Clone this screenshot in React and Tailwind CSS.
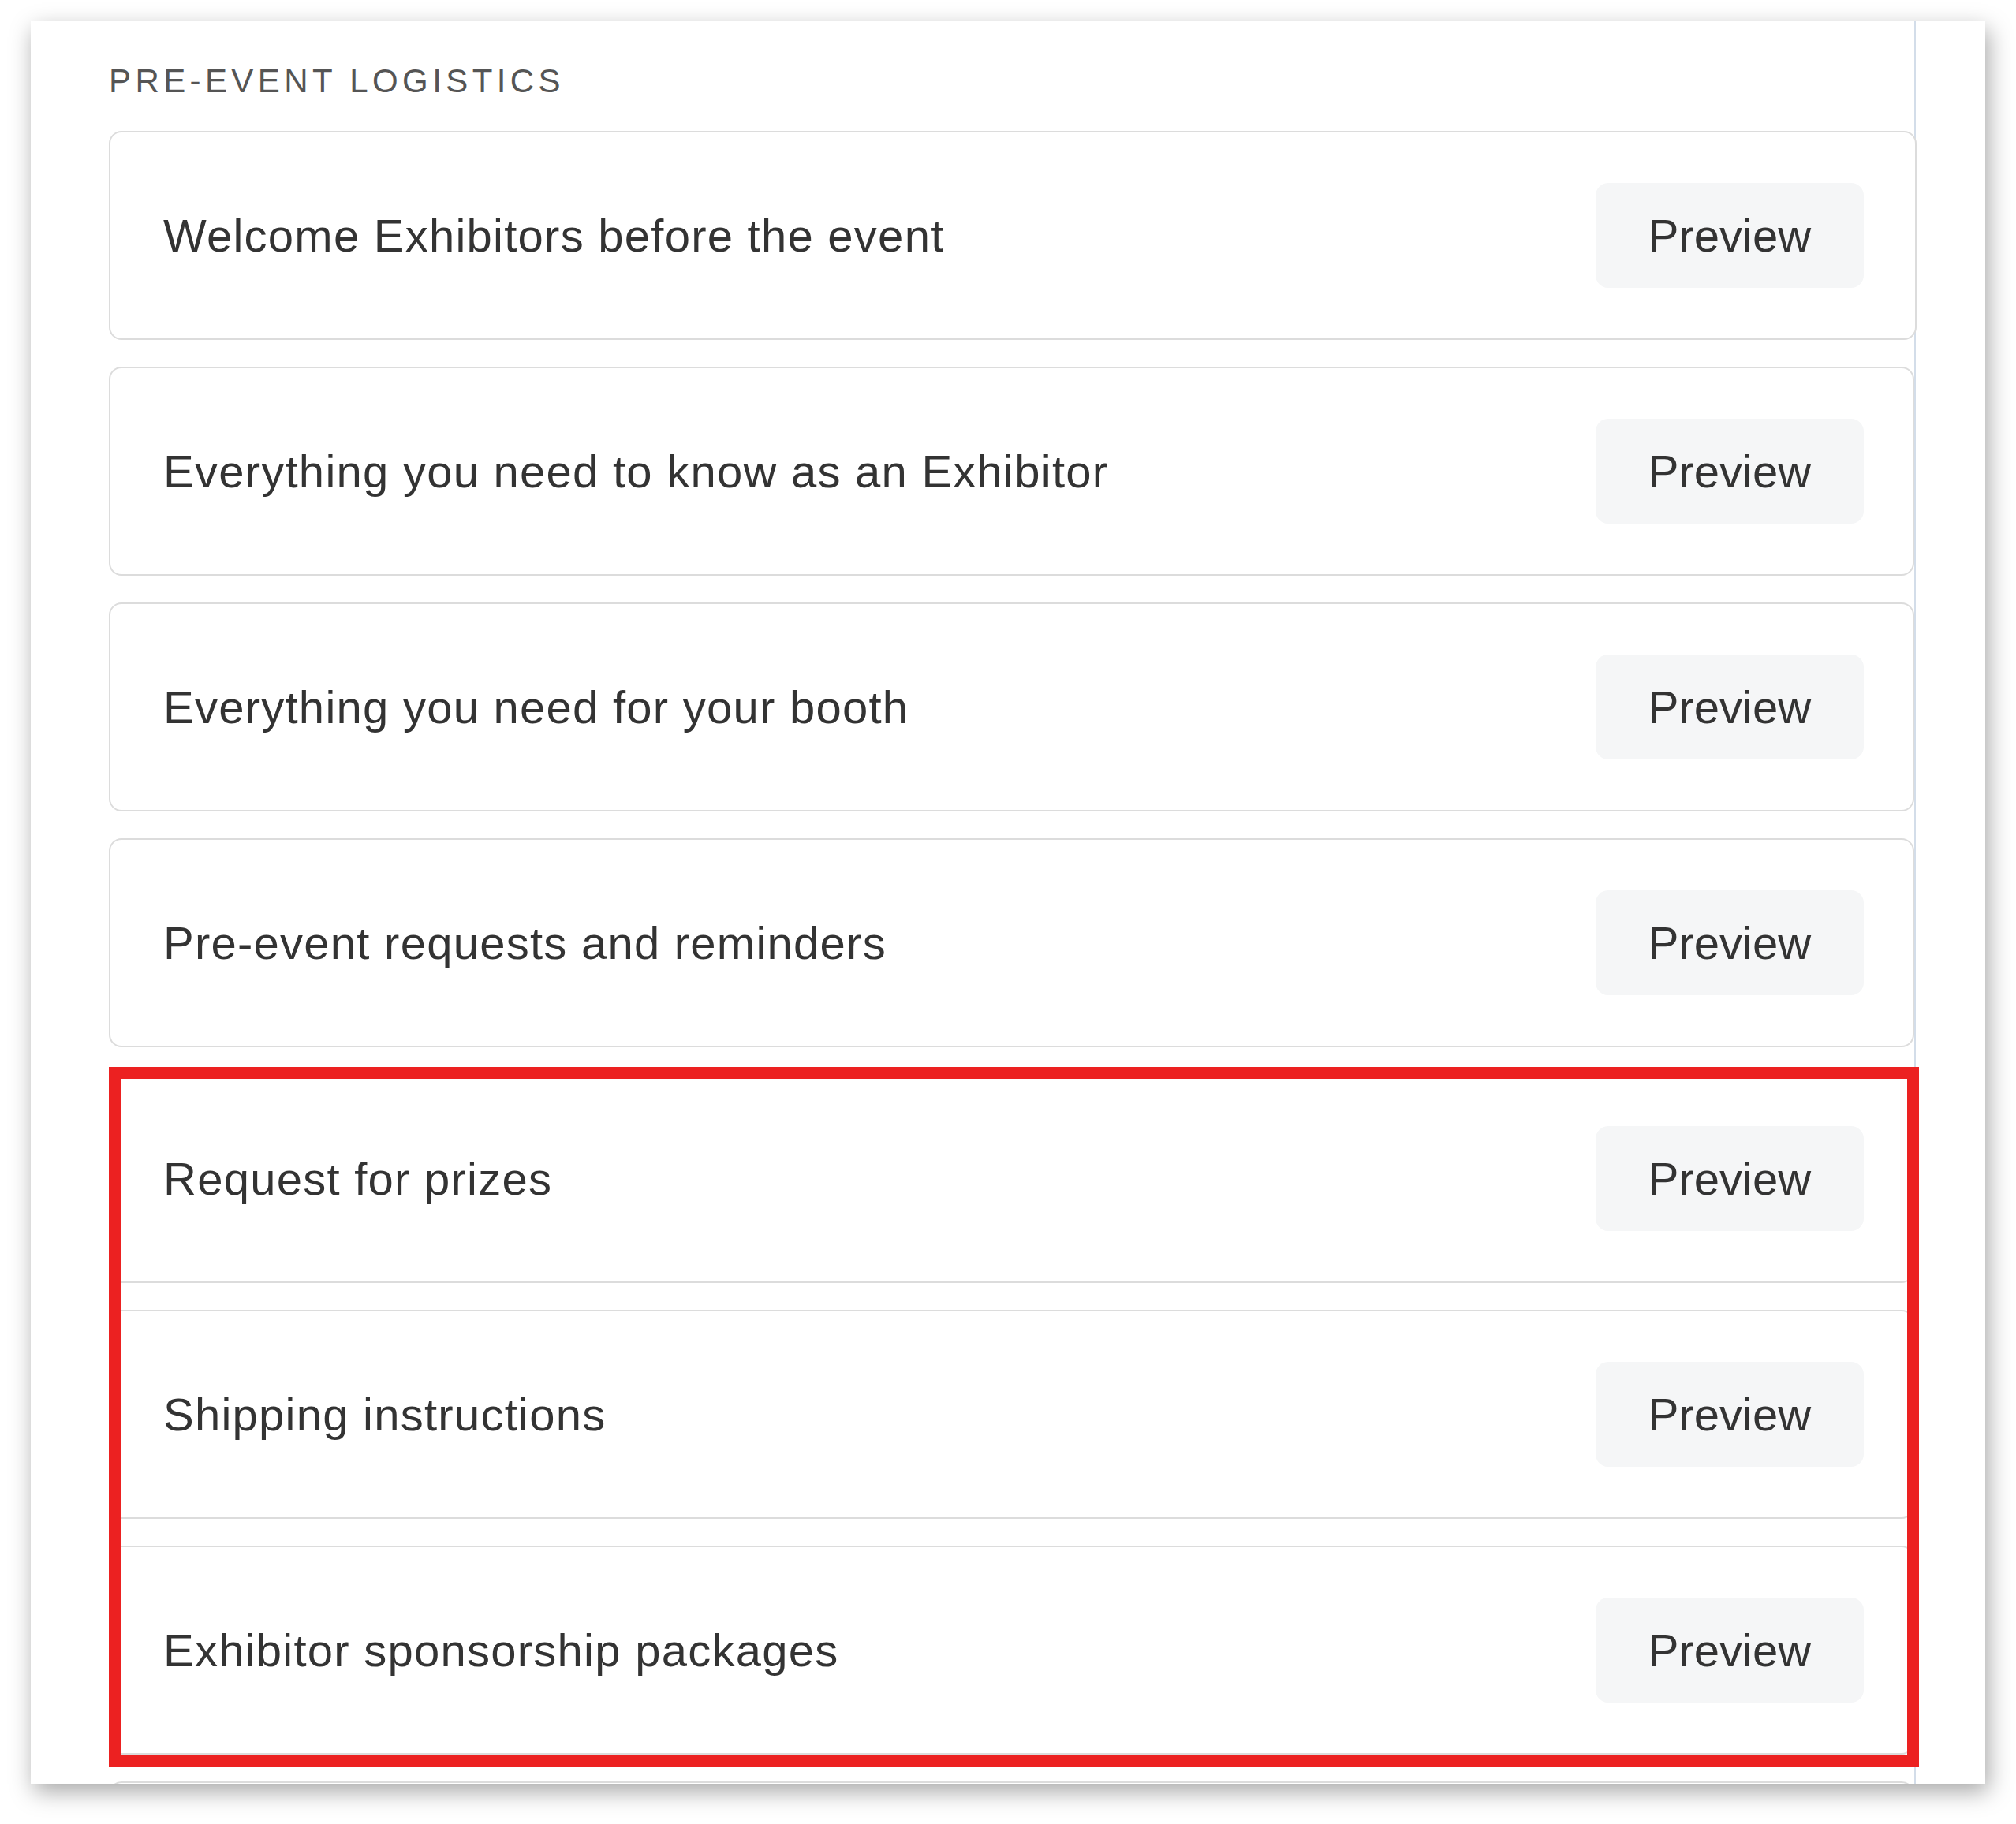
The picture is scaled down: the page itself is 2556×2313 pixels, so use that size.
const ITEMS = [
  "Welcome Exhibitors before the event",
  "Everything you need to know as an Exhibitor",
  "Everything you need for your booth",
  "Pre-event requests and reminders",
  "Request for prizes",
  "Shipping instructions",
  "Exhibitor sponsorship packages",
];

function TemplateRow({ title, first }) {
  return (
    <div
      className={`flex h-[265px] shrink-0 items-center justify-between rounded-[16px] border-2 border-[#dcdcdc] bg-white pl-[67px] ${first ? "-mr-[3px] pr-[65px]" : "pr-[62px]"}`}
    >
      <span className="text-[58px] leading-none tracking-[1.25px] text-[#333333]">{title}</span>
      <button className="flex h-[133px] w-[340px] items-center justify-center rounded-[16px] bg-[#f5f6f7] text-[58px] leading-none text-[#333333]">
        Preview
      </button>
    </div>
  );
}

export default function App() {
  return (
    <div className="h-[2313px] w-[2556px] overflow-hidden bg-white pl-[39px] pt-[27px] font-['Liberation_Sans',Arial,sans-serif]">
      <div className="relative h-[2235px] w-[2478px] overflow-hidden bg-white shadow-[4px_10px_28px_rgba(0,0,0,0.35)]">
        <div className="h-full w-[2390px] border-r-2 border-[#d3dde9] pl-[99px] pt-[55px]">
          <div className="mb-[42px] text-[42px] leading-[42px] tracking-[5.4px] text-[#555555]">PRE-EVENT LOGISTICS</div>
          <div className="flex flex-col gap-[34px]">
            {ITEMS.map((t, i) => (
              <TemplateRow key={t} title={t} first={i === 0} />
            ))}
            {/* next card, only its top edge shows before the panel ends */}
            <div className="h-[265px] shrink-0 rounded-[16px] border-2 border-[#dcdcdc] bg-white" />
          </div>
        </div>
        {/* highlight around the last three templates */}
        <div className="pointer-events-none absolute left-[99px] top-[1326px] h-[888px] w-[2295px] border-[15px] border-[#ec2121]" />
      </div>
    </div>
  );
}
